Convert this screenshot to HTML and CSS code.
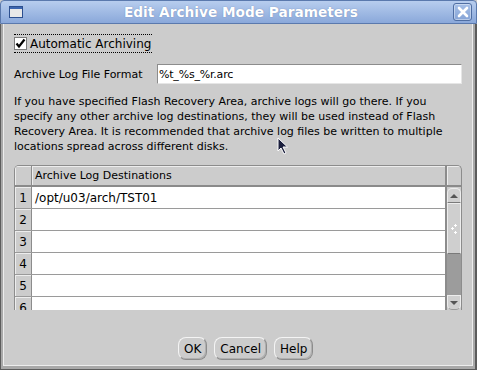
FILE: index.html
```html
<!DOCTYPE html>
<html lang="en">
<head>
    <meta charset="UTF-8">
    <title>Edit Archive Mode Parameters</title>
    <link rel="stylesheet" href="styles.css">
</head>
<body>
    <div class="window">
        <div class="titlebar">
            <svg class="win-icon" width="14" height="12" viewBox="0 0 14 12">
                <rect x="0.5" y="0.5" width="13" height="11" fill="#e8e8e8" stroke="#2c4f8f"/>
                <rect x="1" y="1" width="12" height="2" fill="#3d66b0"/>
            </svg>
            <div class="title">Edit Archive Mode Parameters</div>
            <div class="close-btn">
                <svg width="12" height="12" viewBox="0 0 12 12">
                    <path d="M2 2 L10 10 M10 2 L2 10" stroke="#ffffff" stroke-width="2.6" stroke-linecap="round"/>
                </svg>
            </div>
        </div>

        <div class="frame">
            <div class="pane">
                <div class="check-row">
                    <span class="checkbox">
                        <svg width="11" height="11" viewBox="0 0 11 11">
                            <path d="M1.5 5.5 L4 8.5 L9.5 1.5" fill="none" stroke="#000" stroke-width="2.2"/>
                        </svg>
                    </span>
                    <span>Automatic Archiving</span>
                </div>

                <div class="field-row">
                    <label>Archive Log File Format</label>
                    <div class="input">%t_%s_%r.arc</div>
                </div>

                <p class="note">If you have specified Flash Recovery Area, archive logs will go there. If you specify any other archive log destinations, they will be used instead of Flash Recovery Area. It is recommended that archive log files be written to multiple locations spread across different disks.</p>

                <div class="table">
                    <div class="grid">
                        <div class="row head">
                            <div class="num"></div>
                            <div class="val">Archive Log Destinations</div>
                        </div>
                        <div class="row"><div class="num">1</div><div class="val">/opt/u03/arch/TST01</div></div>
                        <div class="row"><div class="num">2</div><div class="val"></div></div>
                        <div class="row"><div class="num">3</div><div class="val"></div></div>
                        <div class="row"><div class="num">4</div><div class="val"></div></div>
                        <div class="row"><div class="num">5</div><div class="val"></div></div>
                        <div class="row"><div class="num">6</div><div class="val"></div></div>
                    </div>
                    <div class="scroll">
                        <div class="corner"></div>
                        <div class="arrow up"><span class="tri-up"></span></div>
                        <div class="thumb">
                            <span class="grip"></span>
                        </div>
                        <div class="track"></div>
                        <div class="arrow down"><span class="tri-down"></span></div>
                    </div>
                </div>

                <div class="buttons">
                    <button class="btn">OK</button>
                    <button class="btn">Cancel</button>
                    <button class="btn">Help</button>
                </div>
            </div>
        </div>

        <svg class="cursor" width="12" height="18" viewBox="0 0 12 18">
            <path d="M1 1 L1 14 L4 11 L7 17 L9 16 L6 10 L10.5 10 Z" fill="#1b1f3d" stroke="#ffffff" stroke-width="1"/>
        </svg>
    </div>
</body>
</html>
```

FILE: styles.css
```css
* {
    margin: 0;
    padding: 0;
    box-sizing: border-box;
}

body {
    width: 477px;
    height: 370px;
    overflow: hidden;
    font-family: "DejaVu Sans", sans-serif;
    font-size: 11px;
    color: #000;
}

.window {
    position: relative;
    width: 477px;
    height: 370px;
    display: flex;
    flex-direction: column;
    background: #cccccc;
}

.titlebar {
    height: 24px;
    display: flex;
    align-items: center;
    padding: 0 4px 0 8px;
    background: linear-gradient(#b7cdee, #8aa8da);
    border: 1px solid #5a79ad;
    border-radius: 4px 4px 0 0;
}

.win-icon {
    flex: none;
}

.title {
    flex: 1;
    text-align: center;
    color: #ffffff;
    font-weight: bold;
    font-size: 13.7px;
    padding-left: 6px;
    text-shadow: 0 0 1px rgba(40,60,110,0.5);
}

.close-btn {
    width: 19px;
    height: 18px;
    border: 1px solid #4f6ea3;
    border-radius: 3px;
    background: linear-gradient(#a5bfe7, #86a4d6);
    box-shadow: inset 0 0 0 1px rgba(255,255,255,0.4);
    display: flex;
    align-items: center;
    justify-content: center;
}

.frame {
    flex: 1;
    display: flex;
    border: solid #5c5c5c;
    border-width: 0 2px 1px 1px;
}

.pane {
    flex: 1;
    border: solid #a9a9a9;
    border-width: 0 2px 3px 2px;
    box-shadow: inset -1px -1px 0 #ededed, inset 1px 0 0 #ededed;
    padding: 10px 0 0 11px;
    display: flex;
    flex-direction: column;
    align-items: flex-start;
}

.check-row {
    display: flex;
    align-items: center;
    gap: 3px;
    height: 19px;
    border-top: 1px dotted #000;
    border-bottom: 1px dotted #000;
    padding-right: 1px;
    font-size: 12px;
}

.checkbox {
    width: 13px;
    height: 13px;
    background: #ffffff;
    border: 1px solid #7c7c7c;
    display: flex;
    align-items: center;
    justify-content: center;
}

.field-row {
    display: flex;
    align-items: center;
    margin-top: 11px;
    width: 448px;
}

.field-row label {
    width: 143px;
}

.input {
    flex: 1;
    height: 20px;
    background: #ffffff;
    border: 1px solid #8c8c8c;
    border-right-color: #e6e6e6;
    border-bottom-color: #e6e6e6;
    padding: 2px 1px;
    line-height: 15px;
    letter-spacing: -0.2px;
}

.note {
    margin-top: 10px;
    width: 450px;
    line-height: 15px;
}

.table {
    margin-top: 11px;
    width: 448px;
    height: 145px;
    display: flex;
    border: 1px solid #8c8c8c;
    border-bottom: none;
    border-radius: 5px 5px 0 0;
    overflow: hidden;
}

.grid {
    flex: 1;
    overflow: hidden;
    border-right: 1px solid #8c8c8c;
}

.row {
    display: flex;
    height: 22px;
    border-bottom: 1px solid #9a9a9a;
}

.row.head {
    height: 21px;
    border-bottom: 2px solid #8a8a8a;
}

.num {
    width: 17px;
    flex: none;
    background: #cccccc;
    border-right: 1px solid #8c8c8c;
    box-shadow: inset 1px 1px 0 #ededed;
    display: flex;
    align-items: center;
    justify-content: center;
    font-size: 12px;
}

.val {
    flex: 1;
    background: #ffffff;
    display: flex;
    align-items: center;
    padding-left: 3px;
    font-size: 12px;
}

.head .val {
    background: #cccccc;
    box-shadow: inset 1px 1px 0 #ededed;
    font-size: 11px;
}

.scroll {
    width: 15px;
    flex: none;
    display: flex;
    flex-direction: column;
    border-left: 1px solid #8c8c8c;
}

.corner {
    height: 21px;
    border-bottom: 2px solid #8a8a8a;
    box-shadow: inset 1px 1px 0 #ededed;
}

.arrow {
    height: 15px;
    background: #d0d0d0;
    border: 1px solid #ededed;
    border-radius: 5px 5px 0 0;
    display: flex;
    align-items: center;
    justify-content: center;
}

.arrow.up {
    border-bottom: 1px solid #7a7a7a;
    margin-top: 1px;
}

.arrow.down {
    border-radius: 0 0 5px 5px;
    border-top: 1px solid #ededed;
    border-bottom-color: #9a9a9a;
}

.tri-up {
    border: 4px solid transparent;
    border-top: none;
    border-bottom: 4px solid #555;
}

.tri-down {
    border: 4px solid transparent;
    border-bottom: none;
    border-top: 4px solid #555;
}

.thumb {
    height: 51px;
    background: #cfcfcf;
    border: 1px solid #ededed;
    border-bottom: 1px solid #7a7a7a;
    display: flex;
    align-items: center;
    justify-content: center;
}

.grip {
    width: 6px;
    height: 10px;
    background:
        radial-gradient(circle, #ffffff 1px, transparent 1.2px) 3px 0 / 3px 3px no-repeat,
        radial-gradient(circle, #ffffff 1px, transparent 1.2px) 0 3px / 3px 3px no-repeat,
        radial-gradient(circle, #ffffff 1px, transparent 1.2px) 3px 7px / 3px 3px no-repeat;
}

.track {
    flex: 1;
    background: #9c9c9c;
}

.buttons {
    display: flex;
    gap: 7px;
    margin-top: 27px;
    margin-left: 164px;
}

.btn {
    height: 23px;
    padding: 0 5px;
    font-family: "DejaVu Sans", sans-serif;
    font-size: 12px;
    background: #cccccc;
    border: 1px solid #8c8c8c;
    border-top-color: #f4f4f4;
    border-left-color: #f4f4f4;
    border-radius: 8px;
    box-shadow: inset -1px -1px 0 #b0b0b0;
    color: #000;
}

.cursor {
    position: absolute;
    left: 277px;
    top: 137px;
}
```
